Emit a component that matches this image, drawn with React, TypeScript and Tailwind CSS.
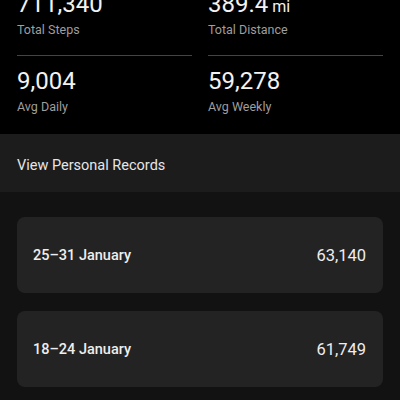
export default function App() {
  const stats = [
    [
      { value: "711,340", label: "Total Steps" },
      { value: "389.4", unit: "mi", label: "Total Distance" },
    ],
    [
      { value: "9,004", label: "Avg Daily" },
      { value: "59,278", label: "Avg Weekly" },
    ],
  ];
  const weeks = [
    { range: "25–31 January", steps: "63,140" },
    { range: "18–24 January", steps: "61,749" },
  ];

  return (
    <div className="w-[400px] h-[400px] overflow-hidden bg-[#121212] font-['Roboto',sans-serif]">
      {/* summary */}
      <div className="bg-black px-[17px] pb-[18px]">
        <div className="grid grid-cols-2 gap-x-4 -mt-[10px]">
          {stats[0].map((s) => (
            <div key={s.label} className="pb-[16px] border-b border-[#444]">
              <div className="h-[28px] text-[24px] leading-[28px] text-[#f2f2f2]">
                {s.value}
                {s.unit && <span className="text-[16px] leading-none ml-1">{s.unit}</span>}
              </div>
              <div className="mt-[3px] text-[12.5px] leading-[18px] text-[#9e9e9e]">{s.label}</div>
            </div>
          ))}
          {stats[1].map((s) => (
            <div key={s.label} className="pt-[11px]">
              <div className="text-[24px] leading-[28px] text-[#f2f2f2]">{s.value}</div>
              <div className="mt-[3px] text-[12.5px] leading-[18px] text-[#9e9e9e]">{s.label}</div>
            </div>
          ))}
        </div>
      </div>

      <div className="h-[58px] bg-[#1c1c1c] px-[17px] pt-[6px] flex items-center text-[14.5px] text-[#e6e6e6]">
        View Personal Records
      </div>

      <div className="px-[17px] pt-[25px] flex flex-col gap-[18px]">
        {weeks.map((w) => (
          <div
            key={w.range}
            className="h-[76px] rounded-lg bg-[#232323] pl-4 pr-[17px] pt-[2px] flex items-center justify-between"
          >
            <span className="text-[14.5px] font-medium text-[#eeeeee]">{w.range}</span>
            <span className="text-[16.5px] text-[#eeeeee]">{w.steps}</span>
          </div>
        ))}
      </div>
    </div>
  );
}
